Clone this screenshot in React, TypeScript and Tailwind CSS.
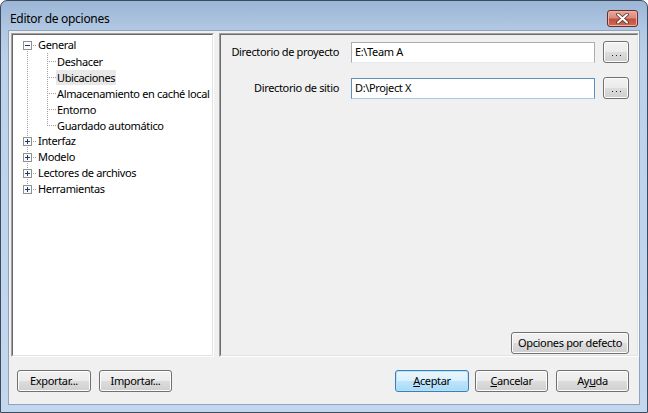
import React from "react";

const FONT = { fontFamily: '"Noto Sans", "Liberation Sans", Arial, sans-serif' };

function vdots(x: number, y0: number, y1: number, key: string) {
  const out: React.ReactElement[] = [];
  for (let y = y0; y < y1; y += 2) out.push(<rect key={key + y} x={x} y={y} width={1} height={1} fill="#a0a0a0" />);
  return out;
}
function hdots(y: number, x0: number, x1: number, key: string) {
  const out: React.ReactElement[] = [];
  for (let x = x0; x < x1; x += 2) out.push(<rect key={key + x} x={x} y={y} width={1} height={1} fill="#a0a0a0" />);
  return out;
}

function Expander({ open }: { open: boolean }) {
  return (
    <g>
      <rect x={10.5} y={4.5} width={8} height={8} fill="#fbfbfb" stroke="#919191" />
      <rect x={12} y={8} width={5} height={1} fill="#1c3a6e" />
      {!open && <rect x={14} y={6} width={1} height={5} fill="#1c3a6e" />}
    </g>
  );
}

function RootRow({ label, open, first, last }: { label: string; open: boolean; first?: boolean; last?: boolean }) {
  return (
    <div className="flex h-[16px] items-center">
      <svg width={24} height={16} className="shrink-0">
        {!first && vdots(14, 0, 4, "a")}
        {!last && vdots(14, 14, 16, "b")}
        <Expander open={open} />
        {hdots(8, 20, 24, "h")}
      </svg>
      <span className="whitespace-nowrap px-[1px] leading-[16px] text-black">{label}</span>
    </div>
  );
}

function ChildRow({ label, last, selected }: { label: string; last?: boolean; selected?: boolean }) {
  return (
    <div className="flex h-[16px] items-center">
      <svg width={43} height={16} className="shrink-0">
        {vdots(14, 0, 16, "r")}
        {vdots(34, 0, last ? 9 : 16, "c")}
        {hdots(8, 36, 43, "h")}
      </svg>
      <span className={"whitespace-nowrap px-[1px] leading-[15px] text-black " + (selected ? "bg-[#e8e8e8]" : "")}>{label}</span>
    </div>
  );
}

function Btn({ children, w, def }: { children: React.ReactNode; w: string; def?: boolean }) {
  return (
    <div
      className={
        "flex h-[22px] items-center justify-center rounded-[3px] border text-black " +
        w +
        (def
          ? " border-[#3c7fb1] shadow-[inset_0_0_0_1px_#b6e3fb]"
          : " border-[#707070] shadow-[inset_0_0_0_1px_#fcfcfc]")
      }
      style={{
        background: def
          ? "linear-gradient(to bottom, #eaf6fd 0%, #d9f0fc 50%, #bee6fd 50%, #a7d9f5 100%)"
          : "linear-gradient(to bottom, #f2f2f2 0%, #ebebeb 50%, #dddddd 50%, #cfcfcf 100%)",
      }}
    >
      {children}
    </div>
  );
}

function DotsBtn() {
  return (
    <div
      className="flex h-[22px] w-[26px] shrink-0 items-end justify-center rounded-[3px] border border-[#707070] pb-[6px] shadow-[inset_0_0_0_1px_#fcfcfc]"
      style={{ background: "linear-gradient(to bottom, #f2f2f2 0%, #ebebeb 50%, #dddddd 50%, #cfcfcf 100%)" }}
    >
      <svg width={9} height={1}>
        <rect x={0} y={0} width={1} height={1} fill="#222" />
        <rect x={4} y={0} width={1} height={1} fill="#222" />
        <rect x={8} y={0} width={1} height={1} fill="#222" />
      </svg>
    </div>
  );
}

export default function App() {
  return (
    <div className="h-[413px] w-[648px] bg-white text-[12px]" style={FONT}>
      <div
        className="flex h-[413px] w-[648px] flex-col rounded-t-[7px] border border-[#3e4b5c]"
        style={{ background: "linear-gradient(to bottom, #9bb5d5 0px, #b0c8e3 28px, #bcd2eb 60px, #c3d8ef 413px)" }}
      >
        <div className="flex h-[29px] shrink-0 items-start justify-between pl-[9px] pr-[9px]">
          <span className="mt-[10px] text-[12px] leading-[16px] tracking-[-0.3px] text-black">Editor de opciones</span>
          <div
            className="mt-[9px] flex h-[17px] w-[31px] items-center justify-center rounded-[3px] border border-[#6d2b2b] shadow-[inset_0_0_0_1px_#e8b3a8]"
            style={{ background: "linear-gradient(to bottom, #e9a99b 0%, #d98a7b 45%, #c4503c 55%, #cf6a52 100%)" }}
          >
            <svg width={13} height={11} viewBox="0 0 13 11">
              <path d="M2 1.5 L11 9.5 M11 1.5 L2 9.5" stroke="#5b2a26" strokeWidth={3.6} strokeLinecap="round" />
              <path d="M2 1.5 L11 9.5 M11 1.5 L2 9.5" stroke="#ffffff" strokeWidth={2} strokeLinecap="round" />
            </svg>
          </div>
        </div>
        <div className="mx-[7px] mb-[7px] flex flex-1 flex-col border border-[#8fa3bb] bg-[#f0f0f0] text-[11px] tracking-[-0.35px]">
          <div className="flex h-[325px] gap-[5px] pl-[2px] pr-0 pt-[2px]">
            <div className="h-[324px] w-[203px] border border-[#a0a0a0] border-b-white border-r-white bg-white">
              <div className="h-full border border-[#696969] border-b-[#e3e3e3] border-r-[#e3e3e3] bg-white pl-0 pt-[2px]">
                <RootRow label="General" open first />
                <ChildRow label="Deshacer" />
                <ChildRow label="Ubicaciones" selected />
                <ChildRow label="Almacenamiento en caché local" />
                <ChildRow label="Entorno" />
                <ChildRow label="Guardado automático" last />
                <RootRow label="Interfaz" open={false} />
                <RootRow label="Modelo" open={false} />
                <RootRow label="Lectores de archivos" open={false} />
                <RootRow label="Herramientas" open={false} last />
              </div>
            </div>
            <div className="flex h-[324px] w-[420px] flex-col border border-[#a0a0a0] border-b-white border-r-white">
              <div className="flex flex-1 flex-col border border-[#6d6d6d] border-b-[#e3e3e3] border-r-[#e3e3e3] pr-[8px] pt-[6px]">
                <div className="flex h-[22px] items-center">
                  <span className="w-[118px] shrink-0 text-right">Directorio de proyecto</span>
                  <div className="ml-[12px] flex h-[21px] flex-1 items-center border border-[#abadb3] border-b-[#e3e9ef] bg-white pl-[3px]">E:\Team A</div>
                  <div className="ml-[8px]"><DotsBtn /></div>
                </div>
                <div className="mt-[14px] flex h-[22px] items-center">
                  <span className="w-[118px] shrink-0 text-right">Directorio de sitio</span>
                  <div className="ml-[12px] flex h-[21px] flex-1 items-center border border-[#5a8fc2] border-b-[#a9c9ea] bg-white pl-[3px]">D:\Project X</div>
                  <div className="ml-[8px]"><DotsBtn /></div>
                </div>
                <div className="flex-1" />
                <div className="mb-[1px] flex justify-end">
                  <Btn w="w-[118px] h-[21px]">Opciones por defecto</Btn>
                </div>
              </div>
            </div>
          </div>
          <div className="mt-[14px] flex items-center pl-[8px] pr-[10px]">
            <Btn w="w-[74px]">Exportar...</Btn>
            <div className="w-[8px]" />
            <Btn w="w-[73px]">Importar...</Btn>
            <div className="flex-1" />
            <Btn w="w-[74px]" def><span><span className="underline">A</span>ceptar</span></Btn>
            <div className="w-[6px]" />
            <Btn w="w-[73px]"><span><span className="underline">C</span>ancelar</span></Btn>
            <div className="w-[8px]" />
            <Btn w="w-[73px]"><span>Ay<span className="underline">u</span>da</span></Btn>
          </div>
        </div>
      </div>
    </div>
  );
}
